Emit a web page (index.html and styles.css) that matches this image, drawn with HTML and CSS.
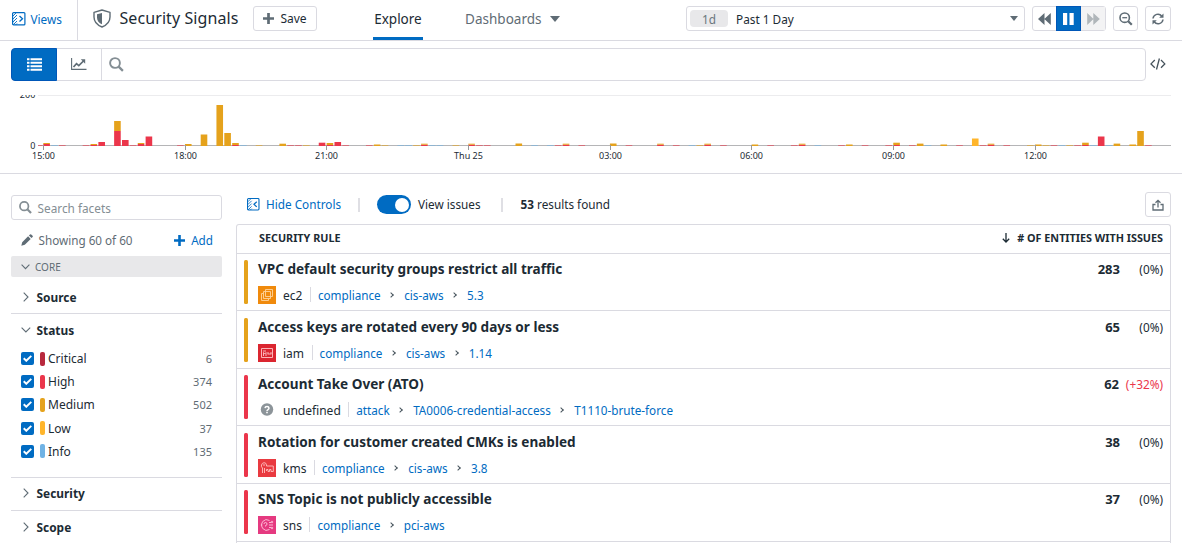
FILE: index.html
```
<!DOCTYPE html>
<html lang="en">
<head>
<meta charset="utf-8">
<title>Security Signals</title>
<link rel="stylesheet" href="styles.css">
</head>
<body>
<header class="topbar">
  <a class="views"><svg width="14" height="14" viewBox="0 0 14 14"><rect x=".6" y=".6" width="12.3" height="12.3" rx="1" fill="none" stroke="currentColor" stroke-width="1.2"/><path d="M1 4l3-3M1 7l4-4M1 10l4-4M1 13l4-4M3.500 13l1.500-1.500" stroke="currentColor" stroke-width=".9"/><path d="M7.500 4l3 2.800-3 2.800" fill="none" stroke="currentColor" stroke-width="1.300"/></svg><span>Views</span></a>
  <div class="brand">
    <svg width="18" height="19" viewBox="0 0 18 19"><path d="M9 1L17 3.300V8C17 13 14 16 9 18C4 16 1 13 1 8V3.300Z" fill="none" stroke="#5f6c75" stroke-width="1.400" stroke-linejoin="round"/><path d="M9 4L4 5.300V8.500C4 12 6 14 9 15.200Z" fill="#5f6c75"/></svg>
    <h1>Security Signals</h1>
  </div>
  <button class="save"><svg width="11" height="11" viewBox="0 0 11 11"><path d="M5.500 0v11M0 5.500h11" stroke="#5f6c75" stroke-width="2.700"/></svg><span>Save</span></button>
  <nav class="tabs"><a class="tab active">Explore</a><a class="tab">Dashboards<i class="caret"></i></a></nav>
  <div class="time"><span class="pill">1d</span><span>Past 1 Day</span><i class="caret dark"></i></div>
  <div class="player">
    <span class="back"><svg width="13" height="12" viewBox="0 0 13 12"><path d="M6.500 0v12L0 6zM12.800 0v12L6.300 6z" fill="#5f6c75"/></svg></span>
    <span class="pause"><svg width="11" height="12" viewBox="0 0 11 12"><path d="M0 0h4.200v12H0zM6.500 0h4.200v12H6.500z" fill="#fff"/></svg></span>
    <span class="next"><svg width="13" height="12" viewBox="0 0 13 12"><path d="M.2 0v12l6.300-6zM6.300 0v12l6.500-6z" fill="#b0b6ba"/></svg></span>
  </div>
  <button class="square zoom"><svg width="14" height="14" viewBox="0 0 14 14"><circle cx="5.700" cy="5.700" r="4.700" fill="none" stroke="#5f6c75" stroke-width="1.600"/><path d="M3.300 5.700h4.800" stroke="#5f6c75" stroke-width="1.300"/><path d="M9.200 9.200l3.600 3.600" stroke="#5f6c75" stroke-width="2.200"/></svg></button>
  <button class="square reload"><svg width="12" height="12" viewBox="0 0 12 12"><g fill="none" stroke="#5f6c75" stroke-width="1.500"><path d="M1 5.500A4.900 4.900 0 0 1 9.800 3.200"/><path d="M11 6.500A4.900 4.900 0 0 1 2.200 8.800"/></g><path d="M11.500 .5v4.300H7.200zM.5 11.500V7.200h4.300z" fill="#5f6c75"/></svg></button>
</header>

<div class="searchrow">
  <div class="searchbar">
    <span class="mode on"><svg width="15" height="13" viewBox="0 0 15 13"><path d="M0 1.200h2.500M0 4.700h2.500M0 8.200h2.500M0 11.700h2.500M3.500 1.200H15M3.500 4.700H15M3.500 8.200H15M3.500 11.700H15" stroke="#fff" stroke-width="2.100"/></svg></span>
    <span class="mode"><svg width="16" height="13" viewBox="0 0 16 13"><path d="M.6 0v11.400H15.500" fill="none" stroke="#5f6c75" stroke-width="1.100"/><path d="M2.500 9L5.500 5.600l2.300 2L12.500 3" fill="none" stroke="#5f6c75" stroke-width="1.700"/><path d="M9.800 1.300h4.400v4.400z" fill="#5f6c75"/></svg></span>
    <span class="lens"><svg width="15" height="15" viewBox="0 0 15 15"><circle cx="6" cy="6" r="4.900" fill="none" stroke="#848e94" stroke-width="1.900"/><path d="M9.600 9.600l4.300 4.300" stroke="#848e94" stroke-width="2.300"/></svg></span>
  </div>
  <svg class="code" width="16" height="12" viewBox="0 0 16 12"><path d="M4.800 2L1 5.900l3.800 3.900M11 2l3.800 3.900L11 9.800M9.400.5L6.500 11.500" fill="none" stroke="#45525b" stroke-width="1.300"/></svg>
</div>

<svg class="chart" width="1182" height="78" viewBox="0 95 1182 78">
  <path d="M38 95.500H1171" stroke="#ececee"/>
  <text x="35.300" y="98" text-anchor="end">200</text>
  <text x="35.300" y="149" text-anchor="end">0</text>
  <path d="M38 145.500H1171" stroke="#b5b5b7"/>
  <g id="bars"></g>
  <g id="ticks"></g>
</svg>

<main class="content">
  <aside class="facets">
    <div class="facetsearch"><svg width="13" height="13" viewBox="0 0 15 15"><circle cx="6" cy="6" r="4.900" fill="none" stroke="#848e94" stroke-width="2"/><path d="M9.600 9.600l4.300 4.300" stroke="#848e94" stroke-width="2.500"/></svg><span>Search facets</span></div>
    <div class="showing"><svg width="12" height="12" viewBox="0 0 12 12"><path d="M.3 11.700L1.200 8.200 7.100 2.300 9.700 4.900 3.800 10.800zM7.900 1.500L9 .4q.6-.5 1.200 0l1.400 1.400q.5.600 0 1.200l-1.100 1.100z" fill="#5f6c75"/></svg><span>Showing 60 of 60</span><a class="add"><svg width="11" height="11" viewBox="0 0 11 11"><path d="M5.500 0v11M0 5.500h11" stroke="#006bc2" stroke-width="2.600"/></svg><span>Add</span></a></div>
    <div class="core"><svg width="9" height="6" viewBox="0 0 9 6"><path d="M.6.700l3.900 4L8.400.7" fill="none" stroke="#5f6c75" stroke-width="1.100"/></svg><span>CORE</span></div>
    <div class="facet source"><svg width="6" height="10" viewBox="0 0 6 10"><path d="M.7.700L5 5 .7 9.300" fill="none" stroke="#5f6c75" stroke-width="1.100"/></svg><span>Source</span></div>
    <div class="facet status"><svg class="down" width="10" height="6" viewBox="0 0 10 6"><path d="M.6.600l4.300 4.400L9.200.6" fill="none" stroke="#5f6c75" stroke-width="1.100"/></svg><span>Status</span></div>
    <ul class="levels">
      <li><i class="check"><svg width="9" height="7" viewBox="0 0 9 7"><path d="M.7 3.300l2.600 2.500L8.300.9" fill="none" stroke="#fff" stroke-width="1.900"/></svg></i><i class="swatch critical"></i><span>Critical</span><b>6</b></li>
      <li><i class="check"><svg width="9" height="7" viewBox="0 0 9 7"><path d="M.7 3.300l2.600 2.500L8.300.9" fill="none" stroke="#fff" stroke-width="1.900"/></svg></i><i class="swatch high"></i><span>High</span><b>374</b></li>
      <li><i class="check"><svg width="9" height="7" viewBox="0 0 9 7"><path d="M.7 3.300l2.600 2.500L8.300.9" fill="none" stroke="#fff" stroke-width="1.900"/></svg></i><i class="swatch medium"></i><span>Medium</span><b>502</b></li>
      <li><i class="check"><svg width="9" height="7" viewBox="0 0 9 7"><path d="M.7 3.300l2.600 2.500L8.300.9" fill="none" stroke="#fff" stroke-width="1.900"/></svg></i><i class="swatch low"></i><span>Low</span><b>37</b></li>
      <li><i class="check"><svg width="9" height="7" viewBox="0 0 9 7"><path d="M.7 3.300l2.600 2.500L8.300.9" fill="none" stroke="#fff" stroke-width="1.900"/></svg></i><i class="swatch info"></i><span>Info</span><b>135</b></li>
    </ul>
    <div class="facet security"><svg width="6" height="10" viewBox="0 0 6 10"><path d="M.7.700L5 5 .7 9.300" fill="none" stroke="#5f6c75" stroke-width="1.100"/></svg><span>Security</span></div>
    <div class="facet scope"><svg width="6" height="10" viewBox="0 0 6 10"><path d="M.7.700L5 5 .7 9.300" fill="none" stroke="#5f6c75" stroke-width="1.100"/></svg><span>Scope</span></div>
  </aside>

  <section class="results">
    <div class="toolbar">
      <a class="hide"><svg width="13" height="13" viewBox="0 0 14 14"><rect x=".6" y=".6" width="12.3" height="12.3" rx="1" fill="none" stroke="currentColor" stroke-width="1.200"/><path d="M1 4l3-3M1 7l4-4M1 10l4-4M1 13l4-4M3.500 13l1.500-1.500" stroke="currentColor" stroke-width=".9"/><path d="M10.500 4l-3 2.800 3 2.800" fill="none" stroke="currentColor" stroke-width="1.300"/></svg><span>Hide Controls</span></a>
      <i class="sep"></i>
      <span class="toggle"><i></i></span><span class="issues">View issues</span>
      <i class="sep second"></i>
      <span class="found"><b>53</b> results found</span>
      <button class="share"><svg width="12" height="12" viewBox="0 0 12 12"><path d="M3.500 5.500H1V11H11V5.500H8.500M6 8.500V1.500M3.500 3.800L6 1.300l2.500 2.500" fill="none" stroke="#5f6c75" stroke-width="1.300"/></svg></button>
    </div>
    <div class="table">
      <div class="thead"><span>SECURITY RULE</span><span class="sorted"><svg width="8" height="10" viewBox="0 0 8 10"><path d="M4 0v9M.8 5.800L4 9l3.200-3.200" fill="none" stroke="#1c2b34" stroke-width="1.300"/></svg><span># OF ENTITIES WITH ISSUES</span></span></div>

      <article class="rule medium-rule">
        <div class="info-col"><h2>VPC default security groups restrict all traffic</h2>
          <div class="meta"><svg class="ico" viewBox="0 0 18 18"><rect width="18" height="18" fill="#f08a0c"/><g fill="none" stroke="#ffd59c" stroke-width=".9"><path d="M7.500 3.500h7v7h-7zM5.500 12.500v-7h7v7zM5 7.500H3.500v7h7V13"/></g></svg><span class="svc">ec2</span><i class="bar"></i><a>compliance</a><i class="chev"></i><a>cis-aws</a><i class="chev"></i><a>5.3</a></div></div>
        <div class="count"><strong>283</strong><span>(0%)</span></div>
      </article>
      <article class="rule medium-rule">
        <div class="info-col"><h2>Access keys are rotated every 90 days or less</h2>
          <div class="meta"><svg class="ico" viewBox="0 0 18 18"><rect width="18" height="18" fill="#db2630"/><g fill="none" stroke="#ffc4c6" stroke-width=".9"><path d="M3.500 4.500h11v9h-11zM5 7h3M5.500 12V8.500l1.200 1.500L8 8.500V12M9.500 10h4M10 8v2M13 8v2"/></g></svg><span class="svc">iam</span><i class="bar"></i><a>compliance</a><i class="chev"></i><a>cis-aws</a><i class="chev"></i><a>1.14</a></div></div>
        <div class="count"><strong>65</strong><span>(0%)</span></div>
      </article>
      <article class="rule">
        <div class="info-col"><h2>Account Take Over (ATO)</h2>
          <div class="meta"><svg class="ico" viewBox="0 0 18 18"><circle cx="9" cy="8.500" r="6.200" fill="#8c9499"/><path d="M7 7.200Q7.200 5.500 9 5.500T11 7.100Q11 8 10 8.600T9 10" fill="none" stroke="#fff" stroke-width="1.500"/><path d="M8.200 10.800h1.600v1.500H8.200z" fill="#fff"/></svg><span class="svc">undefined</span><i class="bar"></i><a>attack</a><i class="chev"></i><a>TA0006-credential-access</a><i class="chev"></i><a>T1110-brute-force</a></div></div>
        <div class="count up"><strong>62</strong><span>(+32%)</span></div>
      </article>
      <article class="rule">
        <div class="info-col"><h2>Rotation for customer created CMKs is enabled</h2>
          <div class="meta"><svg class="ico" viewBox="0 0 18 18"><rect width="18" height="18" fill="#e93a40"/><g fill="none" stroke="#ffc1c1" stroke-width=".9"><path d="M4.500 14V9Q3 8 3.500 6T6 3.700 8.500 6v1h6.800v5.500H13v-2h-1.500v2H10v-2H8.500V12M6.500 14V9M5 6h2"/></g></svg><span class="svc">kms</span><i class="bar"></i><a>compliance</a><i class="chev"></i><a>cis-aws</a><i class="chev"></i><a>3.8</a></div></div>
        <div class="count"><strong>38</strong><span>(0%)</span></div>
      </article>
      <article class="rule">
        <div class="info-col"><h2>SNS Topic is not publicly accessible</h2>
          <div class="meta"><svg class="ico" viewBox="0 0 18 18"><rect width="18" height="18" fill="#e53a80"/><g fill="none" stroke="#ffc4dc" stroke-width=".9"><path d="M11.500 4.500A5.300 5.300 0 1 0 11.500 13.500M6 8q0-1.500 1.500-1.500T9 8 7.500 9.500v1M11 9h4M11 6.500h2M11 11.500h2"/><circle cx="14" cy="6" r=".8"/><circle cx="14" cy="12" r=".8"/><path d="M3 9h1.500"/></g></svg><span class="svc">sns</span><i class="bar"></i><a>compliance</a><i class="chev"></i><a>pci-aws</a></div></div>
        <div class="count"><strong>37</strong><span>(0%)</span></div>
      </article>
    </div>
  </section>
</main>
<script src="chart.js"></script>
</body>
</html>
```
FILE: styles.css
```
* { box-sizing: border-box; }
body { margin: 0; height: 543px; overflow: hidden; background: #fff; color: #1c2b34; font-family: "Noto Sans", sans-serif; font-size: 12px; }
svg { display: block; flex: none; }
h1, h2, ul { margin: 0; padding: 0; }
button { background: #fff; font: inherit; color: inherit; padding: 0; border: 1px solid #dadae1; border-radius: 3px; display: flex; align-items: center; justify-content: center; flex: none; }
a { color: #006bc2; }
i { flex: none; }

.topbar { height: 41px; border-bottom: 1px solid #dadae1; display: flex; align-items: flex-start; }
.views { width: 78px; height: 40px; border-right: 1px solid #dadae1; padding: 0 0 3px 12px; display: flex; align-items: center; gap: 4.500px; font-size: 11.800px; }
.brand { display: flex; align-items: center; height: 36px; margin-left: 15px; width: 160px; gap: 8.500px; }
h1 { font-size: 16px; font-weight: 400; white-space: nowrap; letter-spacing: .08px; }
.save { width: 64px; height: 25px; margin-top: 6px; gap: 6px; }
.tabs { display: flex; margin-left: 56px; width: 313px; gap: 41px; }
.tab { height: 40px; line-height: 38px; padding: 0 1.200px; font-size: 13.500px; color: #5f6c75; display: flex; }
.tab.active { color: #1c2b34; border-bottom: 3px solid #006bc2; }
.caret { border: 5px solid transparent; border-top: 6px solid #5f6c75; border-bottom: 0; align-self: center; margin: 0 0 2px 9px; }
.time { width: 339px; height: 25px; margin-top: 6px; border: 1px solid #dadae1; border-radius: 3px; display: flex; align-items: center; padding: 0 6px 0 3px; gap: 8px; font-size: 11.800px; }
.pill { background: #e8e8ea; border-radius: 4px; width: 38px; height: 17px; line-height: 18px; text-align: center; color: #6b777e; }
.dark { margin-left: auto; margin-bottom: 0; border-width: 5px 4.500px 0; }
.player { display: flex; width: 74px; height: 25px; margin: 6px 0 0 7px; border: 1px solid #dadae1; border-radius: 3px; }
.player span { display: flex; align-items: center; justify-content: center; }
.back { width: 23px; }
.pause { width: 26px; height: 25px; margin-top: -1px; background: #006bc2; border: 1px solid #0057b8; }
.next { width: 24px; background: #f3f3f4; }
.square { width: 25px; height: 25px; margin: 6px 0 0 7px; }
.reload { width: 26px; }

.searchrow { height: 54px; padding: 7px 0 0 11px; display: flex; }
.searchbar { width: 1135px; height: 33px; border: 1px solid #dadae1; border-radius: 4px; display: flex; }
.mode { width: 45px; display: flex; align-items: center; justify-content: center; border-right: 1px solid #dadae1; }
.mode.on { width: 46px; height: 33px; margin: -1px 0 0 -1px; background: #006bc2; border: 1px solid #0057b8; border-radius: 4px 0 0 4px; }
.lens { padding: 8px 0 0 7px; }
.code { margin: 10px 0 0 4px; }

.chart { font-size: 9px; fill: #1c2b34; }
.content { border-top: 1px solid #dadae1; display: flex; }

.facets { width: 211px; margin: 21px 14px 0 11px; flex: none; }
.facetsearch { height: 25px; border: 1px solid #dadae1; border-radius: 3px; display: flex; align-items: center; padding-left: 7px; gap: 5.500px; color: #848e94; font-size: 11.800px; }
.facetsearch svg { margin-bottom: 1px; }
.facetsearch span { padding-top: 1px; }
.showing { height: 36px; padding: 4px 9px 0 10px; display: flex; align-items: center; gap: 5.500px; color: #5f6c75; font-size: 11.700px; }
.showing span { margin-top: -1px; }
.add { display: flex; align-items: center; gap: 6.500px; margin-left: auto; }
.core { height: 21px; background: #e8e8ea; border-radius: 2px; display: flex; align-items: center; padding-left: 10px; gap: 5px; font-size: 10px; color: #5f6c75; }
.facet { display: flex; align-items: center; font-weight: 700; padding: 0 0 0 12px; font-size: 11.900px; }
.facet span { margin-left: 7.500px; }
.source { height: 37px; padding-top: 4px; border-bottom: 1px solid #dadae1; }
.status { height: 33px; padding: 0 0 1px 10px; }
.status span { margin-left: 5.500px; }
.levels { list-style: none; height: 130px; }
.levels li { height: 23.200px; display: flex; align-items: center; padding: 0 10px; }
.check { width: 13px; height: 13px; border-radius: 2px; background: #006bc2; display: flex; align-items: center; justify-content: center; }
.swatch { width: 5px; height: 14px; border-radius: 2px; margin: 0 3px 0 6px; }
.critical { background: #b8293d; }
.high { background: #eb364b; }
.medium { background: #e5a21c; }
.low { background: #ffb52b; }
.info { background: #70b3e5; }
.levels b { margin-left: auto; font-weight: 400; font-size: 11px; color: #5f6c75; }
.security { height: 34px; padding-bottom: 2px; border: solid #dadae1; border-width: 1px 0; }
.scope { height: 32px; }

.results { width: 935px; margin-top: 18px; flex: none; }
.toolbar { height: 32px; padding: 0 0 7px 11px; display: flex; align-items: center; font-size: 11.750px; }
.toolbar span:not(.toggle) { padding-bottom: 1px; }
.hide { display: flex; align-items: center; gap: 6px; width: 111px; white-space: nowrap; }
.sep { width: 2px; height: 14px; background: #dfdfe4; }
.toggle { width: 34px; height: 19px; border-radius: 10px; background: #006bc2; margin-left: 17px; display: flex; justify-content: flex-end; padding: 2.500px; }
.toggle i { width: 14px; height: 14px; border-radius: 50%; background: #fff; }
.issues { margin-left: 7px; width: 83px; white-space: nowrap; }
.found { margin-left: 17.500px; white-space: nowrap; }
.share { width: 26px; height: 25px; margin-left: auto; }
.table { border: 1px solid #dadae1; border-bottom: 0; border-radius: 3px 3px 0 0; height: 330px; }
.thead { height: 29px; border-bottom: 1px solid #dadae1; display: flex; align-items: center; justify-content: space-between; padding: 0 7px 3px 22px; font-size: 10.800px; font-weight: 700; }
.sorted { display: flex; align-items: center; gap: 7px; }
.sorted svg { margin-top: 1px; }
.rule { height: 58px; border-bottom: 1px solid #dadae1; padding: 6px 7px 0; display: flex; justify-content: space-between; }
.rule:nth-child(2), .rule:nth-child(4) { height: 57px; }
.rule:nth-child(3), .rule:nth-child(5) { padding-top: 7px; }
.info-col { height: 44px; padding-left: 14px; position: relative; }
.info-col::before { content: ""; position: absolute; left: 0; top: 0; width: 4px; height: 44px; border-radius: 1.500px; background: #eb364b; }
.medium-rule .info-col::before { background: #e5a21c; }
h2 { font-size: 13.550px; line-height: 18px; white-space: nowrap; }
.meta { height: 18px; margin-top: 8px; display: flex; align-items: center; white-space: nowrap; }
.meta a { font-size: 11.700px; }
.ico { width: 18px; height: 18px; margin-right: 7px; }
.bar { width: 1px; height: 15px; background: #dadae1; margin: 0 7px 2px 7.500px; }
.chev { width: 4px; height: 4px; border: solid #45525b; border-width: 1px 1px 0 0; transform: rotate(45deg); margin: 0 11px 0 8.500px; }
.count { display: flex; line-height: 18px; }
.count strong { font-size: 13px; text-align: right; }
.count span { width: 43px; text-align: right; font-size: 11.800px; line-height: 18px; }
.up span { width: 44px; color: #eb364b; }
```
FILE: chart.js
```
// One slot is ten minutes; each entry is [slot, [colour, height], ...], stacked upwards.
const R = "#eb364b", O = "#e5a21c", Y = "#ffb52b", B = "#70b3e5";
const bars = [
  [0, [R, 2], [O, 1]], [6, [R, 1], [O, 1]], [7, [R, 4]], [9, [R, 15], [O, 10]], [10, [R, 6]],
  [12, [R, 2], [O, 1]], [13, [R, 9.5]], [18, [O, 2]], [20, [O, 11.5]], [22, [O, 41]], [23, [O, 13]],
  [24, [R, 1], [O, 2]], [30, [O, 2.3]], [35, [R, 3.3]], [36, [R, 1], [O, 2]], [37, [R, 4]],
  [42, [O, 1.5]], [60, [O, 2.5]], [72, [O, 2.5]], [90, [O, 1.5]], [102, [O, 1.5]],
  [108, [R, 1], [O, 2.3]], [111, [O, 2.4]], [114, [O, 1.5]], [118, [Y, 7.5]], [126, [O, 1.5]],
  [132, [R, 1], [O, 2.3]], [134, [R, 9.5]], [136, [O, 2.4]], [138, [O, 1.5]], [139, [O, 15]]
];
for (const k of [48, 54, 66, 78, 84, 96, 120]) bars.push([k, [R, 1.3], [O, 1]]);
const traces = {
  [R]: [2, 5, 11, 17, 31, 32, 38, 41, 55, 56, 65, 68, 74, 80, 86, 92, 95, 101, 104, 107, 110, 116, 119, 122, 128, 131, 140],
  [O]: [27, 33, 43, 47, 52, 83, 125, 127, 130],
  [B]: [1, 25, 45, 46, 49, 50, 62, 64, 82, 98, 112, 129, 133, 135]
};
let out = `<rect x="38" y="145" width="4.500" height="1" fill="${R}" opacity=".55"/>`;
for (const [k, ...parts] of bars) {
  let y = 146;
  const x = 43.3 + k * 7.87;
  for (const [fill, h] of parts) {
    y -= h;
    out += `<rect x="${x}" y="${y}" width="6.600" height="${h}" fill="${fill}"/>`;
  }
}
for (const fill in traces) {
  for (const k of traces[fill]) {
    out += `<rect x="${43.3 + k * 7.87}" y="145" width="6.600" height="1" fill="${fill}" opacity=".55"/>`;
  }
}
document.getElementById("bars").innerHTML = out;
document.getElementById("ticks").innerHTML = ["15:00", "18:00", "21:00", "Thu 25", "03:00", "06:00", "09:00", "12:00"]
  .map((label, n) => {
    const x = Math.floor(43.6 + n * 141.65) + 0.5;
    return `<path d="M${x} 145v5" stroke="#999"/><text x="${x}" y="159" text-anchor="middle">${label}</text>`;
  }).join("");
```
